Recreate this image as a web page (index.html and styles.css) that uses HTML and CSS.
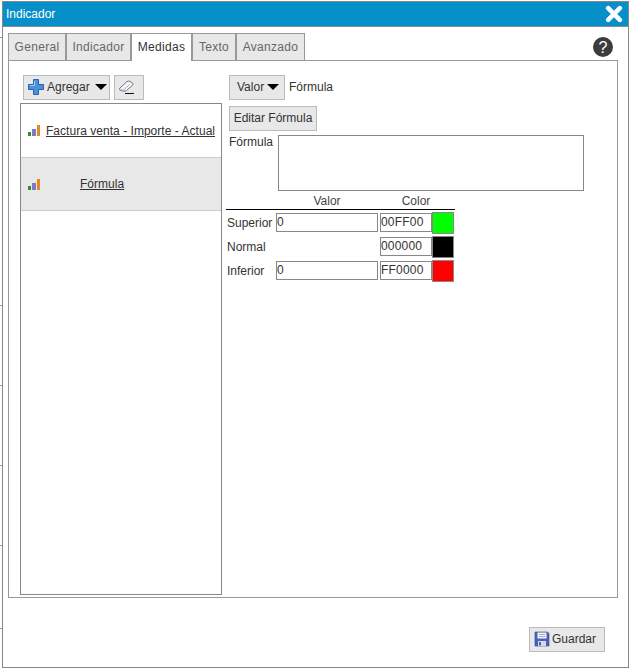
FILE: index.html
```html
<!DOCTYPE html>
<html lang="es">
<head>
<meta charset="utf-8">
<title>Indicador</title>
<link rel="stylesheet" href="styles.css">
</head>
<body>
<div class="stub s1"></div><div class="stub s2"></div><div class="stub s3"></div><div class="stub s4"></div><div class="stub s5"></div><div class="stub s6"></div>
<div class="dialog">
  <header class="titlebar">
    <span class="title">Indicador</span>
    <svg class="close" width="18" height="18" viewBox="0 0 18 18"><path d="M3.2 3.2 14.8 14.8M14.8 3.2 3.2 14.8" stroke="#fff" stroke-width="4.6" stroke-linecap="round"/></svg>
  </header>
  <div class="content">
    <div class="tabrow">
      <div class="tabs">
        <div class="tab t-general">General</div>
        <div class="tab t-indicador">Indicador</div>
        <div class="tab t-medidas active">Medidas</div>
        <div class="tab t-texto">Texto</div>
        <div class="tab t-avanzado">Avanzado</div>
      </div>
      <svg class="help" width="20" height="20" viewBox="0 0 20 20"><circle cx="10" cy="10" r="10" fill="#3c3c3c"/><text x="10" y="15.5" text-anchor="middle" class="helpq">?</text></svg>
    </div>
    <div class="panel">
      <div class="leftcol">
        <div class="toolbar">
          <button class="btn add">
            <svg width="18" height="18" viewBox="0 0 18 18"><path d="M6.500 1.500h5v5h5v5h-5v5h-5v-5h-5v-5h5z" fill="#4a90dc" stroke="#2a62a8"/><path d="M7.500 3v4.500h-4.500" fill="none" stroke="#a5d0f5"/></svg>
            <span>Agregar</span><i class="caret"></i>
          </button>
          <button class="btn erase">
            <svg width="18" height="17" viewBox="0 0 18 17"><path d="M1.500 9.500 9 2.500q1.500-1 3 0l2.500 1.500q1.200 1 0 2.200L8.500 11.500q-1.500 1-3.500.5L2.500 11.500q-1.500-.8-1-2z" fill="#f3f5f8" stroke="#6f7884"/><path d="M2 10 5 11.500 11.500 5.500" fill="none" stroke="#aab2bc"/><path d="M7 14.500h9" stroke="#111" stroke-width="1"/></svg>
          </button>
        </div>
        <div class="list">
          <div class="item">
            <svg class="bars" width="12" height="11" viewBox="0 0 12 11"><rect x="0" y="7" width="3" height="4" fill="#2f8f2f"/><rect x="4" y="4" width="4" height="7" fill="#7d78c8"/><rect x="9" y="0" width="3" height="11" fill="#e08a20"/></svg>
            <a class="itemlink">Factura venta - Importe - Actual</a>
          </div>
          <div class="item selected">
            <svg class="bars" width="12" height="11" viewBox="0 0 12 11"><rect x="0" y="7" width="3" height="4" fill="#2f8f2f"/><rect x="4" y="4" width="4" height="7" fill="#7d78c8"/><rect x="9" y="0" width="3" height="11" fill="#e08a20"/></svg>
            <a class="itemlink center">Fórmula</a>
          </div>
        </div>
      </div>
      <div class="rightcol">
        <div class="valrow">
          <button class="btn valor"><span>Valor</span><i class="caret"></i></button>
          <span class="valtext">Fórmula</span>
        </div>
        <button class="btn edit">Editar Fórmula</button>
        <div class="formula">
          <label class="formlabel">Fórmula</label>
          <div class="textarea"></div>
        </div>
        <div class="grid">
          <div class="ghead gvalor">Valor</div>
          <div class="ghead gcolor">Color</div>
          <div class="rule"></div>

          <div class="lab">Superior</div>
          <div class="field val">0</div>
          <div class="field col">00FF00</div>
          <div class="swatch green"></div>

          <div class="lab">Normal</div>
          <div></div>
          <div class="field col">000000</div>
          <div class="swatch black"></div>

          <div class="lab">Inferior</div>
          <div class="field val">0</div>
          <div class="field col">FF0000</div>
          <div class="swatch red"></div>
        </div>
      </div>
    </div>
    <div class="footer">
      <button class="btn save">
        <svg width="16" height="16" viewBox="0 0 16 16"><path d="M1 1h12.500L15 2.500V15H1z" fill="#4a62b8" stroke="#34468c" stroke-width=".6"/><rect x="3.500" y="1.500" width="9" height="6" fill="#f2f2f6"/><path d="M5 3.500h6M5 5.500h6" stroke="#a8b0d0"/><rect x="4" y="10" width="8" height="5" fill="#d8dae6"/><rect x="5" y="11" width="2" height="3.500" fill="#4a62b8"/></svg>
        <span>Guardar</span>
      </button>
    </div>
  </div>
</div>
</body>
</html>
```
FILE: styles.css
```css
* { box-sizing: border-box; }
html, body { margin: 0; padding: 0; height: 100%; background: #fff; }
body {
  font-family: "Liberation Sans", Arial, sans-serif;
  font-size: 12px;
  color: #333;
  overflow: hidden;
  position: relative;
}
.stub { position: absolute; left: 0; width: 2px; height: 1px; background: #999; }
.s1 { top: 37px; } .s2 { top: 305px; } .s3 { top: 385px; } .s4 { top: 465px; } .s5 { top: 545px; } .s6 { top: 628px; }
.dialog {
  margin: 1px 0 0 2px;
  width: 627px;
  height: 667px;
  border: 1px solid #888;
  display: flex;
  flex-direction: column;
  background: #fff;
}
.titlebar {
  height: 25px;
  flex: none;
  background: #068fc9;
  border-bottom: 1px solid #7f8f98;
  display: flex;
  align-items: center;
  justify-content: space-between;
  padding: 0 5px 0 3px;
}
.title { color: #fff; font-size: 12px; }
.close { display: block; }
.content { flex: 1; display: flex; flex-direction: column; padding: 6px 10px 14px 5px; min-height: 0; }
.tabrow { display: flex; justify-content: space-between; height: 27px; flex: none; }
.tabs { display: flex; gap: 0; }
.tab {
  height: 27px;
  background: #e8e8e8;
  border: 1px solid #999;
  border-bottom: none;
  color: #666;
  line-height: 26px;
  letter-spacing: .3px;
  text-align: center;
}
.t-general { width: 58px; }
.t-indicador { width: 65px; }
.t-medidas { width: 61px; }
.t-texto { width: 44px; }
.t-avanzado { width: 69px; }
.tab.active { background: #fff; color: #333; position: relative; height: 28px; z-index: 1; }
.help { margin: 4px 5px 0 0; display: block; }
.helpq { font: 16px "Liberation Sans", Arial, sans-serif; fill: #fff; }
.panel {
  height: 538px;
  flex: none;
  border: 1px solid #999;
  display: flex;
  padding: 14px 0 0 11px;
}
.leftcol { width: 203px; flex: none; display: flex; flex-direction: column; }
.toolbar { display: flex; gap: 4px; padding-left: 3px; height: 28px; flex: none; }
.btn {
  font: inherit;
  color: #333;
  background: #e8e8e8;
  border: 1px solid #bbb;
  height: 25px;
  padding: 0 0 2px;
  margin: 0;
  display: flex;
  align-items: center;
}
.add { width: 87px; padding-left: 3px; gap: 2px; }
.erase { width: 30px; padding-left: 3px; padding-bottom: 0; }
.caret {
  display: inline-block;
  width: 0; height: 0;
  border-left: 6px solid transparent;
  border-right: 6px solid transparent;
  border-top: 6px solid #000;
  margin-left: 3px;
}
.list { height: 492px; width: 202px; border: 1px solid #888; flex: none; }
.item {
  height: 53px;
  border-bottom: 1px solid #ccc;
  display: flex;
  align-items: center;
  padding-left: 7px;
}
.item:first-child { height: 54px; }
.item.selected { background: #e8e8e8; }
.bars { flex: none; }
.itemlink { text-decoration: underline; margin-left: 6px; color: #333; letter-spacing: .03px; }
.itemlink.center { margin-left: 40px; }
.rightcol { margin-left: 2px; flex: 1; display: flex; flex-direction: column; align-items: flex-start; }
.valrow { display: flex; align-items: center; gap: 4px; margin-left: 4px; height: 25px; }
.valor { width: 56px; padding-left: 7px; }
.valtext { padding-bottom: 2px; }
.edit { margin: 6px 0 0 4px; width: 88px; justify-content: center; }
.formula { display: flex; gap: 4px; margin: 4px 0 0 4px; height: 56px; }
.formlabel { width: 45px; line-height: 14px; }
.textarea { width: 306px; height: 56px; border: 1px solid #888; background: #fff; }
.grid {
  display: grid;
  grid-template-columns: 50px 102px 54px 22px;
  width: 229px;
  margin: 3px 0 0 1px;
  grid-auto-rows: 24px;
  grid-template-rows: 15px 2px;
}
.ghead { text-align: center; color: #444; line-height: 15px; }
.gvalor { grid-column: 2; }
.gcolor { grid-column: 3 / 5; }
.rule { grid-column: 1 / -1; width: 229px; height: 1px; background: #000; align-self: start; }
.lab { padding-left: 1px; line-height: 24px; white-space: nowrap; }
.field {
  border: 1px solid #888;
  height: 19px;
  line-height: 17px;
  margin-top: 2px;
  padding-left: 0;
  color: #333;
  background: #fff;
  letter-spacing: .2px;
}
.field.col { margin-left: 2px; }
.swatch { width: 22px; height: 22px; border: 1px solid #888; margin-top: 1px; }
.green { background: #0f0; } .black { background: #000; } .red { background: #f00; }
.footer { flex: 1; display: flex; justify-content: flex-end; align-items: flex-end; padding-right: 13px; padding-bottom: 1px; }
.save { width: 76px; padding-left: 4px; gap: 2px; }
```
